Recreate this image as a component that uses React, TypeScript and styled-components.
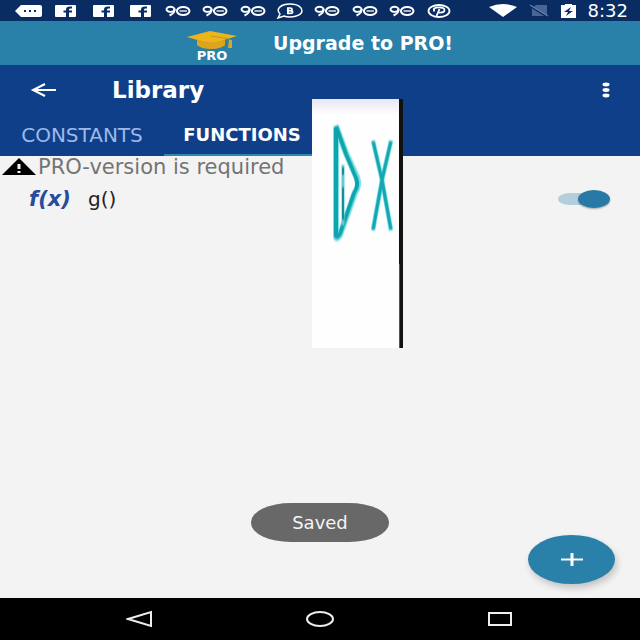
import React, { useState } from 'react';
import styled, { createGlobalStyle } from 'styled-components';

const GlobalStyle = createGlobalStyle`
  * { box-sizing: border-box; }
  body { margin: 0; background: #f3f3f3; font-family: "DejaVu Sans", Roboto, sans-serif; }
  button, input { font: inherit; }
  button { border: 0; padding: 0; background: none; color: inherit; cursor: pointer; }
  svg { display: block; flex: none; }
`;

const Screen = styled.div`
  position: relative;
  display: flex;
  flex-direction: column;
  min-height: 100vh;
  background: #f3f3f3;
`;

const StatusBar = styled.div`
  display: flex;
  align-items: center;
  height: 21px;
  padding: 0 12px 0 10px;
  background: #092c62;
  color: #fff;
`;

const Notifications = styled.div`
  display: grid;
  grid-template-columns: repeat(12, 1fr);
  justify-items: center;
  align-items: center;
  flex: 0 1 448px;
`;

const SystemIcons = styled.div`
  display: flex;
  align-items: center;
  justify-content: flex-end;
  flex: 1;
  gap: 12px;
`;

const Clock = styled.time`
  font: 18px/20px "DejaVu Sans", sans-serif;
`;

const Promo = styled.a`
  display: flex;
  align-items: center;
  justify-content: center;
  gap: 36px;
  height: 44px;
  background: #2980a9;
  color: #fff;
  font: bold 19px/20px "DejaVu Sans", sans-serif;
  text-decoration: none;
`;

const ProMark = styled.span`
  display: flex;
  flex-direction: column;
  align-items: center;
  padding-top: 6px;
  font: bold 13px/10px "DejaVu Sans", sans-serif;
`;

const Header = styled.header`
  display: flex;
  flex-direction: column;
  height: 91px;
  background: #103f8a;
  color: #fff;
`;

const TitleRow = styled.div`
  display: flex;
  align-items: center;
  height: 50px;
  padding: 0 24px 0 28px;
`;

const Title = styled.h1`
  flex: 1;
  margin: 0 0 0 52px;
  font: bold 23px/24px "DejaVu Sans", sans-serif;
`;

const IconButton = styled.button`
  display: flex;
  align-items: center;
  justify-content: center;
  height: 32px;
`;

const Tabs = styled.div`
  display: flex;
  flex: 1;
`;

const Tab = styled.button<{ $active?: boolean }>`
  width: ${p => (p.$active ? '156px' : '164px')};
  border-bottom: 2px solid ${p => (p.$active ? '#2d86b4' : 'transparent')};
  color: ${p => (p.$active ? '#fff' : '#9db9e8')};
  font: ${p => (p.$active ? 'bold 18px' : '20px')}/20px "DejaVu Sans", sans-serif;
`;

const Content = styled.main`
  flex: 1;
`;

const Notice = styled.p`
  display: flex;
  align-items: center;
  gap: 2px;
  height: 21px;
  margin: 0;
  padding-left: 2px;
  color: #747474;
  font-size: 21px;
  line-height: 20px;
`;

const FunctionRow = styled.label`
  display: flex;
  align-items: center;
  height: 44px;
  padding: 0 30px 0 29px;
  color: #222;
  font-size: 20px;
`;

const Formula = styled.span`
  width: 59px;
  color: #264c9d;
  font: italic bold 21px/24px "DejaVu Sans", sans-serif;
`;

const FunctionName = styled.span`
  flex: 1;
`;

const Switch = styled.input`
  appearance: none;
  display: grid;
  align-items: center;
  width: 52px;
  height: 18px;
  margin: 0;
  cursor: pointer;
  &::before, &::after { content: ""; grid-area: 1 / 1; }
  &::before {
    width: 44px;
    height: 12px;
    border-radius: 12px / 6px;
    background: #b5cedd;
  }
  &::after {
    width: 32px;
    height: 18px;
    border-radius: 50%;
    background: #8b98a1;
    box-shadow: 0 1px 2px #0005;
  }
  &:checked::after { justify-self: end; background: #2879a5; }
`;

const Toast = styled.div`
  align-self: center;
  width: 138px;
  margin-bottom: 56px;
  border-radius: 40px / 19px;
  background: #686868;
  color: #f5f5f5;
  font-size: 18px;
  line-height: 39px;
  text-align: center;
`;

const AddButton = styled.button`
  position: absolute;
  right: 25px;
  bottom: 56px;
  display: grid;
  place-items: center;
  width: 87px;
  height: 49px;
  border-radius: 50%;
  background: #2980a9;
  box-shadow: 2px 4px 7px #0003;
`;

const FloatingPicture = styled.div`
  position: absolute;
  top: 99px;
  left: 312px;
`;

const NavigationBar = styled.nav`
  display: flex;
  align-items: center;
  justify-content: center;
  gap: 152px;
  height: 42px;
  background: #000;
`;

const Message = () => (
  <svg width="28" height="12" viewBox="0 0 28 12">
    <path d="M0 6 6 0h19q2 0 2 2v8q0 2-2 2H6Z" fill="#fff" />
    <path d="M9 6h2m3 0h2m3 0h2" stroke="#092c62" strokeWidth="2" />
  </svg>
);

const Facebook = () => (
  <svg width="21" height="12" viewBox="0 0 21 12">
    <rect width="21" height="12" rx="1" fill="#fff" />
    <path d="M11 12V7.5H8.5V5.5H11V4.5Q11 1.5 15 1.5h2v2h-1.3q-1.7 0-1.7 1.2v.8h3v2h-3V12Z" fill="#092c62" />
  </svg>
);

const Ninety = () => (
  <svg width="26" height="12" viewBox="0 0 26 12" fill="none" stroke="#fff">
    <ellipse cx="5.5" cy="4.3" rx="4" ry="2.6" strokeWidth="1.9" />
    <path d="M9.5 4Q10 8 4.5 10.4" strokeWidth="2.2" />
    <ellipse cx="18.2" cy="6" rx="6.3" ry="4" strokeWidth="2" />
    <path d="M14.5 6h7.5" strokeWidth="1.3" />
  </svg>
);

const ChatBusiness = () => (
  <svg width="27" height="16" viewBox="0 0 27 16" fill="none" stroke="#fff">
    <path d="m2 15 2-4C-1 6 5 1 14 1s12 4 12 7-5 6-12 6q-4 0-6-1Z" strokeWidth="1.5" />
    <path d="M12 5h2q2 0 2 1.3T14 7.6h-2 2q2.6 0 2.6 1.4T14 10.4h-2ZM11.8 4.4V11" strokeWidth="1.7" />
  </svg>
);

const Pinterest = () => (
  <svg width="24" height="14" viewBox="0 0 24 14" fill="none" stroke="#fff">
    <ellipse cx="12" cy="7" rx="10.5" ry="6" strokeWidth="1.8" />
    <path d="M7.5 7.5Q5 3.4 12 3.4q5.5 0 5.5 2.6t-4.5 2.6q-1.5 0-2-.6m1.5-3L9.5 12" strokeWidth="1.8" />
  </svg>
);

const Wifi = () => (
  <svg width="28" height="13" viewBox="0 0 28 13">
    <path d="M0 3Q14-3 28 3L14 13Z" fill="#fff" />
  </svg>
);

const NoSim = () => (
  <svg width="20" height="13" viewBox="0 0 20 13">
    <path d="M7 1h11v11H3V4Z" fill="#4a6493" />
    <path d="m1 2 17 11" stroke="#092c62" strokeWidth="1.5" />
    <path d="m1 1 18 11" stroke="#6680aa" strokeWidth="1.2" />
  </svg>
);

const Battery = () => (
  <svg width="15" height="14" viewBox="0 0 15 14">
    <path d="M4 0h7v1h4v13H0V1h4Z" fill="#fff" />
    <path d="m10 3-7 5h4l-2 4 7-5H8Z" fill="#092c62" />
  </svg>
);

const GraduationCap = () => (
  <svg width="50" height="20" viewBox="0 0 50 20">
    <path d="M10 8v6q4 4 14 4t14-4V7" fill="#dca51c" />
    <path d="M0 6 23 0l27 5-26 8Z" fill="#edb51b" />
    <path d="M10 9q14 6 28 0" fill="none" stroke="#d4a020" />
    <path d="m24 5 19 3v7" fill="none" stroke="#b8952c" />
    <path d="M42 9h3v8h-4Z" fill="#d7a629" />
  </svg>
);

const PictureDrawing = () => (
  <svg width="91" height="249" viewBox="0 0 91 249">
    <defs>
      <linearGradient id="fade" x2="0" y2="1">
        <stop stopColor="#e6e6f2" />
        <stop offset="1" stopColor="#fff" />
      </linearGradient>
      <filter id="soft" x="-10%" y="-10%" width="120%" height="120%">
        <feGaussianBlur stdDeviation="0.6 0.9" />
      </filter>
    </defs>
    <path d="M0 0h91v249H0Z" fill="#fefefe" />
    <path d="M0 0h87v16H0Z" fill="url(#fade)" />
    <g fill="none" filter="url(#soft)">
      <path d="M24 28v110q1 3 4-2l15-42q5-8 2-16L34 54 24 27" stroke="#7be0e5" strokeWidth="6" />
      <path d="M24 28v109q1 3 4-2l14-41q5-7 2-15L34 55 24 27" stroke="#08a5ad" strokeWidth="4" />
      <path d="M31 66v60" stroke="#62ccd3" strokeWidth="3" />
      <path d="M31 68v8m0 12v33" stroke="#168d9a" strokeWidth="2" />
      <path d="m61 42 9 39 9-39M61 131l9-50 9 50" stroke="#66dce3" strokeWidth="4.5" />
      <path d="m61 42 9 39 9-39M61 131l9-50 9 50" stroke="#12a6b0" strokeWidth="3" />
    </g>
    <path d="M87 0h4v249h-4Z" fill="#111" />
    <path d="M87.5 165v84" stroke="#555" />
  </svg>
);

export default function App() {
  const [enabled, setEnabled] = useState(true);
  return (
    <Screen>
      <GlobalStyle />
      <StatusBar>
        <Notifications>
          <Message />
          <Facebook /><Facebook /><Facebook />
          <Ninety /><Ninety /><Ninety />
          <ChatBusiness />
          <Ninety /><Ninety /><Ninety />
          <Pinterest />
        </Notifications>
        <SystemIcons>
          <Wifi /><NoSim /><Battery />
          <Clock>8:32</Clock>
        </SystemIcons>
      </StatusBar>
      <Promo href="#upgrade">
        <ProMark><GraduationCap />PRO</ProMark>
        Upgrade to PRO!
      </Promo>
      <Header>
        <TitleRow>
          <IconButton aria-label="Back">
            <svg width="32" height="16" viewBox="0 0 32 16" fill="none" stroke="#fff" strokeWidth="2">
              <path d="M28 8H5M17 2 5 8l12 6" />
            </svg>
          </IconButton>
          <Title>Library</Title>
          <IconButton aria-label="More options">
            <svg width="20" height="16" viewBox="0 0 20 16" fill="#fff">
              <ellipse cx="10" cy="2.5" rx="3.5" ry="1.9" />
              <ellipse cx="10" cy="8" rx="3.5" ry="1.9" />
              <ellipse cx="10" cy="13.5" rx="3.5" ry="1.9" />
            </svg>
          </IconButton>
        </TitleRow>
        <Tabs role="tablist">
          <Tab role="tab" aria-selected={false}>CONSTANTS</Tab>
          <Tab role="tab" aria-selected $active>FUNCTIONS</Tab>
        </Tabs>
      </Header>
      <Content>
        <Notice>
          <svg width="34" height="17" viewBox="0 0 34 17">
            <path d="M17 0 34 17H0Z" fill="#000" />
            <path d="M17 6v5m0 2v2" stroke="#f3f3f3" strokeWidth="3" />
          </svg>
          PRO-version is required
        </Notice>
        <FunctionRow>
          <Formula>f(x)</Formula>
          <FunctionName>g()</FunctionName>
          <Switch type="checkbox" role="switch" checked={enabled} onChange={e => setEnabled(e.target.checked)} />
        </FunctionRow>
      </Content>
      <Toast role="status">Saved</Toast>
      <AddButton aria-label="Add function">
        <svg width="22" height="13" viewBox="0 0 22 13" stroke="#fff">
          <path d="M0 6.5h22" strokeWidth="2" />
          <path d="M11 0v13" strokeWidth="3" />
        </svg>
      </AddButton>
      <NavigationBar>
        <IconButton aria-label="Navigate back">
          <svg width="28" height="18" viewBox="0 0 28 18" fill="none" stroke="#eee">
            <path d="M25 2v14L2 9Z" strokeWidth="2" />
          </svg>
        </IconButton>
        <IconButton aria-label="Home">
          <svg width="28" height="18" viewBox="0 0 28 18" fill="none" stroke="#eee">
            <ellipse cx="14" cy="9" rx="13" ry="7" strokeWidth="2" />
          </svg>
        </IconButton>
        <IconButton aria-label="Recent apps">
          <svg width="28" height="18" viewBox="0 0 28 18" fill="none" stroke="#eee">
            <path d="M3 3h22v12H3Z" strokeWidth="2" />
          </svg>
        </IconButton>
      </NavigationBar>
      <FloatingPicture role="img" aria-label="Teal symbols"><PictureDrawing /></FloatingPicture>
    </Screen>
  );
}
